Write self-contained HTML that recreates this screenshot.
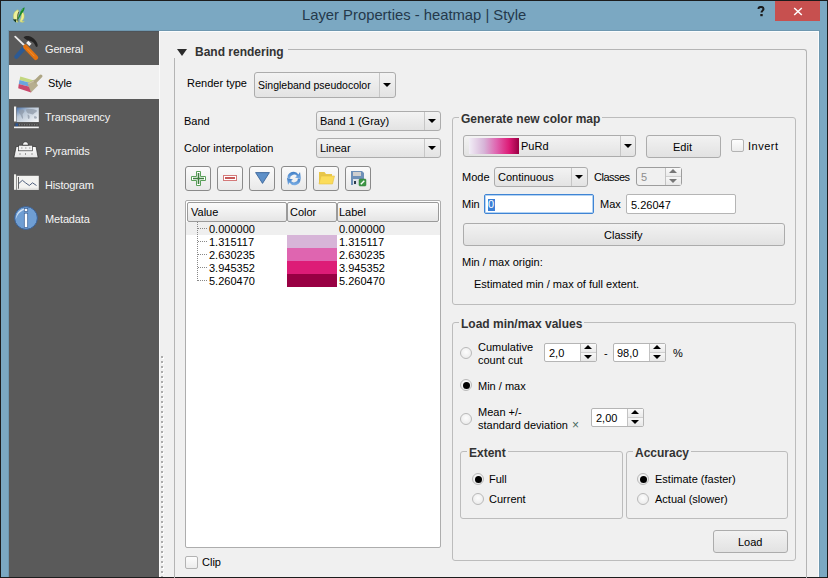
<!DOCTYPE html>
<html><head><meta charset="utf-8">
<style>
*{box-sizing:border-box}
html,body{margin:0;padding:0}
body{width:828px;height:578px;overflow:hidden;position:relative;background:#1c1c1c;font-family:"Liberation Sans",sans-serif;font-size:11px;color:#000}
.a{position:absolute}
.t{position:absolute;white-space:nowrap;font-size:11px;line-height:13px;color:#000}
.b{font-weight:bold;font-size:12px;color:#333}
.cb{position:absolute;border:1px solid #acacac;border-radius:3px;background:linear-gradient(#f3f3f3,#e3e3e3)}
.cb .sep{position:absolute;top:0;bottom:0;width:1px;background:#c6c6c6}
.cb .ar{position:absolute;width:0;height:0;border-left:4px solid transparent;border-right:4px solid transparent;border-top:4.5px solid #000}
.btn{position:absolute;border:1px solid #acacac;border-radius:3px;background:linear-gradient(#f2f2f2,#e2e2e2)}
.tb{position:absolute;width:26px;height:25px;border:1px solid #8a8a8a;border-radius:3px;background:linear-gradient(#fbfbfb,#e9e9e9)}
.le{position:absolute;border:1px solid #b5b5b5;border-radius:2px;background:#fff}
.gb{position:absolute;border:1px solid #bcbcbc;border-radius:3px}
.gbt{position:absolute;background:#f0f0f0;padding:0 2px}
.rd{position:absolute;width:12px;height:12px;border-radius:50%;border:1px solid #b9b9b9;background:radial-gradient(circle at 50% 40%,#fdfdfd,#e6e6e6)}
.rd.on::after{content:"";position:absolute;left:1.5px;top:1.5px;width:7px;height:7px;border-radius:50%;background:#000}
.ck{position:absolute;width:13px;height:13px;border:1px solid #b3b3b3;border-radius:2px;background:linear-gradient(#fdfdfd,#ececec)}
.sb .item{position:absolute;left:0;width:150px;height:34px}
.sb .lbl{position:absolute;color:#f4f4f4;font-size:11px;letter-spacing:-0.15px;line-height:13px;white-space:nowrap}
.spn{position:absolute;border:1px solid #b5b5b5;border-radius:2px;background:#fff}
.spn .sp{position:absolute;right:0;top:0;bottom:0;width:16px;border-left:1px solid #c3c3c3;background:linear-gradient(#fafafa,#ebebeb 45%,#f6f6f6 55%,#e8e8e8)}
.spn .hs{position:absolute;left:0;right:0;top:8px;height:1px;background:#cfcfcf}
.up{position:absolute;width:0;height:0;border-left:4px solid transparent;border-right:4px solid transparent;border-bottom:4px solid #000}
.dn{position:absolute;width:0;height:0;border-left:4px solid transparent;border-right:4px solid transparent;border-top:4px solid #000}
</style></head><body>
<!-- window frame -->
<div class="a" style="left:1px;top:1px;width:826px;height:576px;background:#7ba8c2"></div>
<div class="a" style="left:8px;top:30px;width:812px;height:547px;background:#6f98b0"></div>
<div class="a" style="left:9px;top:31px;width:810px;height:546px;background:#f0f0f0"></div>

<!-- title bar -->
<svg class="a" style="left:8px;top:3px" width="24" height="24" viewBox="0 0 24 24">
 <path d="M10 6.8 C6.5 7.8 5 11.5 5.5 14.5 C6 17.5 8 19.2 10 19.3 C9.2 16.5 9.2 12 10.8 8.8 Z" fill="#eef19a" stroke="#bfc75a" stroke-width="0.5"/>
 <path d="M10.8 8.8 C9.5 11.5 9.3 15.5 10 18.5" stroke="#3c4a2a" stroke-width="0.8" fill="none"/>
 <path d="M13.2 8.2 C15.8 9 16.5 12 16 14.5 C15.6 16.5 14.6 17.5 13.6 18 C14.6 18.5 15.6 18.8 16.4 18.2 C15.6 19.6 13 19.8 11.8 18.3 C13.5 15 14 11 13.2 8.2 Z" fill="#eef08f" stroke="#c2c85a" stroke-width="0.5"/>
 <path d="M16.6 4.2 C16.6 6.5 15.6 8.6 14 10.2 L10.2 16.6 L9.4 16.2 L12.3 9.6 C12.8 7 14.5 5 16.6 4.2 Z" fill="#1c8a2b"/>
 <path d="M13.5 7.5 L14.5 6.5" stroke="#7fd08a" stroke-width="0.8"/>
 <path d="M4.8 16.4 L8.6 16.3 L7.8 19.4 Z" fill="#15391f"/>
</svg>
<div class="t" style="left:302px;top:7px;font-size:14.8px;line-height:17px;color:#24394b">Layer Properties - heatmap | Style</div>
<svg class="a" style="left:757px;top:6px" width="8" height="11" viewBox="0 0 8 11"><path d="M1.5 3 C1.5 1.5 2.5 0.9 4 0.9 C5.5 0.9 6.5 1.8 6.5 3 C6.5 4.5 4.5 4.8 4.5 6.5" stroke="#1b1b1b" stroke-width="2" fill="none"/><rect x="3.3" y="8" width="2.4" height="2.2" fill="#1b1b1b"/></svg>
<div class="a" style="left:775px;top:1px;width:45px;height:20px;background:#c7504f"></div>
<svg class="a" style="left:793px;top:7px" width="10" height="9" viewBox="0 0 10 9"><path d="M1.2 1 L8.8 8 M8.8 1 L1.2 8" stroke="#fff" stroke-width="1.5"/></svg>

<!-- sidebar -->
<div class="a sb" style="left:9px;top:31px;width:150px;height:546px;background:#5a5a5a">
 <div class="item" style="top:34px;background:#f0f0f0"></div>
 <div class="lbl" style="left:36px;top:12px">General</div>
 <div class="lbl" style="left:39px;top:46px;color:#000">Style</div>
 <div class="lbl" style="left:36px;top:80px">Transparency</div>
 <div class="lbl" style="left:36px;top:114px">Pyramids</div>
 <div class="lbl" style="left:36px;top:148px">Histogram</div>
 <div class="lbl" style="left:36px;top:182px">Metadata</div>
</div>
<!-- icons -->
<svg class="a" style="left:12px;top:34px" width="28" height="28" viewBox="0 0 28 28">
 <path d="M11.5 3.2 C13 2 15 1.8 16.5 2.1 C19 2.6 21.5 3.8 23.5 6.5 C25 8.5 26 10.5 25.6 12.2 C25.2 13 24.5 13.2 23.8 12.6 C23.2 11 22.3 9.3 20.8 8 C19.5 7 17.5 6.4 16 6.4 C14.5 5.8 13 5 11.5 3.2 Z" fill="#242424"/>
 <path d="M3.2 2.6 L13.5 12.5" stroke="#ececec" stroke-width="1.8" stroke-linecap="round"/>
 <path d="M13 13 L4.3 22.8" stroke="#2c5a94" stroke-width="4.2" stroke-linecap="round"/>
 <path d="M13.5 12.8 L23.8 23.6" stroke="#e2720f" stroke-width="4.8" stroke-linecap="round"/>
 <path d="M15 14.5 L22.5 22.3" stroke="#f39a44" stroke-width="0.8"/>
 <path d="M15.2 7.8 L18.4 10.8" stroke="#f2f2f2" stroke-width="3.2"/>
</svg>
<svg class="a" style="left:16px;top:74px" width="28" height="22" viewBox="0 0 28 22">
 <path d="M4.3 2.5 L18 6.5 L17.5 9.8 L3.5 6 Z" fill="#c3d77f"/>
 <path d="M3.5 6 L17.5 9.8 L16.5 13.5 L2.8 10 Z" fill="#6aa4de"/>
 <path d="M2.8 10 L16.5 13.5 L15 18.6 L2.2 14.2 Z" fill="#c9486c"/>
 <path d="M11.5 9 L18.5 5.5 L22 11.5 L15 18.6 Z" fill="#b6ae8e"/>
 <path d="M12.5 9.5 L19 6.5" stroke="#d7d1b8" stroke-width="0.7"/>
 <path d="M19.5 7.5 L24.8 2.2" stroke="#ada584" stroke-width="3.2" stroke-linecap="round"/>
</svg>
<svg class="a" style="left:13px;top:104px" width="27" height="26" viewBox="0 0 27 26">
 <defs><linearGradient id="tg" x1="0" y1="0" x2="1" y2="1"><stop offset="0" stop-color="#4a72ab"/><stop offset="0.35" stop-color="#b8c6d6"/><stop offset="1" stop-color="#fafafa"/></linearGradient></defs>
 <rect x="1" y="2.5" width="2.2" height="15" fill="#f4f4f4"/>
 <rect x="3.6" y="3.5" width="22.2" height="14.5" fill="url(#tg)"/>
 <path d="M6 6 C8 5 11 5.5 11.5 7 C11 9 9.5 9.5 9.5 11 C10 12.5 10.5 14 9.5 15 C8.5 13.5 8 11.5 7 10 C6 9 5.5 7.5 6 6 Z M13 5.5 C16 4.8 21 5 24 6.5 C24 8 22 8.5 21 9.5 C20 11 19 10.5 18 10 C17 9.5 15.5 10 14.5 9 C13.5 8 13 7 13 5.5 Z M14.5 10.5 C16 10.5 17 12 16.5 14 C16 15.5 15 15 14.8 13.5 Z M21 12.5 C22.5 12 24 12.5 24 14 C23 15 21.5 15 21 13.5 Z" fill="#8f9aa8" opacity="0.75"/>
 <rect x="1.2" y="19.5" width="24.6" height="2.6" fill="#4a4a4a"/>
 <path d="M6 20.8 H25" stroke="#8a8a8a" stroke-width="1" stroke-dasharray="1 1.5"/>
 <rect x="2.5" y="19.3" width="2.6" height="3" fill="#2a5593"/>
 <rect x="1" y="22.6" width="24.8" height="1.6" fill="#f0f0f0"/>
</svg>
<svg class="a" style="left:13px;top:140px" width="27" height="20" viewBox="0 0 27 20">
 <defs><linearGradient id="pg" x1="0" y1="0" x2="0" y2="1"><stop offset="0" stop-color="#ffffff"/><stop offset="1" stop-color="#e4e4e4"/></linearGradient></defs>
 <path d="M0.8 17.8 L3.2 6.5 L23 6.5 L25.2 17.8 Z" fill="url(#pg)" stroke="#2a2a2a" stroke-width="0.7"/>
 <rect x="5.5" y="5.2" width="14" height="5.6" fill="#f2f2f2" stroke="#3a3a3a" stroke-width="0.7"/>
 <path d="M9.5 5.2 C9.5 3 11 1.8 12.5 1.8 C14 1.8 15.5 3 15.5 5.2 Z" fill="#f8f8f8" stroke="#2a2a2a" stroke-width="0.7"/>
 <path d="M8 8 h1.5 M12 8 h1.5 M16 8 h1.5 M7 13 v2 M12.5 13 v2 M19 13 v2" stroke="#9a9a9a" stroke-width="1"/>
</svg>
<svg class="a" style="left:13px;top:174px" width="27" height="18" viewBox="0 0 27 18">
 <defs><linearGradient id="hg" x1="0" y1="0" x2="0" y2="1"><stop offset="0" stop-color="#f3f3f1"/><stop offset="0.8" stop-color="#f3f3f1"/><stop offset="1" stop-color="#d6d6d4"/></linearGradient></defs>
 <rect x="1" y="0.3" width="2.1" height="15.5" fill="#efefec"/>
 <rect x="3.7" y="1.8" width="22.1" height="14.2" fill="url(#hg)"/>
 <rect x="5.1" y="3" width="0.9" height="11.7" fill="#555"/>
 <path d="M5.8 9.5 L9.4 6.3 L12.5 8.8 L16.3 11.5 L19.5 8.8 L23.5 11.5" stroke="#3d4f70" stroke-width="0.9" fill="none"/>
</svg>
<svg class="a" style="left:13px;top:205px" width="26" height="26" viewBox="0 0 26 26">
 <circle cx="13" cy="13" r="11.4" fill="#6f9ed3" stroke="#3a5f93" stroke-width="1"/>
 <path d="M12 3.2 C7 4 3 8 2.8 14.5 C4 10 7 6 12 4.8 Z" fill="#d2e2f4"/>
 <rect x="11.3" y="3.6" width="3.4" height="3" fill="#fff" stroke="#3a5f93" stroke-width="0.7"/>
 <rect x="11.3" y="8.2" width="3.4" height="14.3" fill="#fff" stroke="#3a5f93" stroke-width="0.7"/>
</svg>

<div class="a" style="left:159px;top:31px;width:660px;height:1px;background:#fbfdfe"></div>
<div class="a" style="left:159px;top:31px;width:1px;height:546px;background:#fafafa"></div>
<div class="a" style="left:9px;top:31px;width:150px;height:1px;background:#4f5459"></div>
<div class="a" style="left:818px;top:31px;width:1px;height:546px;background:#fbfcfd"></div>
<!-- splitter dots -->
<svg class="a" style="left:161px;top:356px" width="3" height="221"><defs><pattern id="dots" width="3" height="5" patternUnits="userSpaceOnUse"><rect x="1" y="1" width="2" height="2" fill="#ffffff"/><rect x="0" y="0" width="2" height="2" fill="#acacac"/></pattern></defs><rect width="3" height="221" fill="url(#dots)"/></svg>

<!-- band rendering group -->
<div class="a" style="left:177px;top:49px;width:0;height:0;border-left:5.5px solid transparent;border-right:5.5px solid transparent;border-top:7px solid #2b2b2b"></div>
<div class="t b" style="left:195px;top:46px">Band rendering</div>
<div class="a" style="left:288px;top:49px;width:519px;height:600px;border-top:1px solid #b4b4b4;border-right:1px solid #b4b4b4;border-top-right-radius:3px"></div>
<div class="a" style="left:174px;top:58px;width:1px;height:520px;background:#b4b4b4"></div>

<div class="t" style="left:187px;top:77px">Render type</div>
<div class="cb" style="left:254px;top:72px;width:142px;height:26px"><div class="sep" style="left:124px"></div><div class="ar" style="left:128px;top:10px"></div></div>
<div class="t" style="left:258px;top:79px;font-size:10.5px">Singleband pseudocolor</div>

<div class="t" style="left:184px;top:115px">Band</div>
<div class="t" style="left:184px;top:142px">Color interpolation</div>
<div class="cb" style="left:316px;top:111px;width:125px;height:20px"><div class="sep" style="left:107px"></div><div class="ar" style="left:111px;top:7px"></div></div>
<div class="t" style="left:320px;top:115px">Band 1 (Gray)</div>
<div class="cb" style="left:316px;top:138px;width:125px;height:20px"><div class="sep" style="left:107px"></div><div class="ar" style="left:111px;top:7px"></div></div>
<div class="t" style="left:320px;top:142px">Linear</div>

<!-- toolbar buttons -->
<div class="tb" style="left:185px;top:166px"><svg class="a" style="left:5px;top:4px" width="16" height="16" viewBox="0 0 16 16"><path d="M5.5 0.5 H9.5 V5.5 H14.5 V9.5 H9.5 V14.5 H5.5 V9.5 H0.5 V5.5 H5.5 Z" fill="#fff" stroke="#5aa05a" stroke-width="1"/><path d="M7.5 2 V13 M2 7.5 H13" stroke="#3f7f3f" stroke-width="1.6"/></svg></div>
<div class="tb" style="left:217px;top:166px"><div class="a" style="left:5px;top:8px;width:14px;height:6px;border:1px solid #d47a7a;background:#fff"><div class="a" style="left:1px;top:1px;width:10px;height:2px;background:#c75a5a"></div></div></div>
<div class="tb" style="left:249px;top:166px"><svg class="a" style="left:5px;top:5px" width="15" height="12" viewBox="0 0 15 12"><path d="M0.6 0.6 H14.4 L7.5 11.4 Z" fill="#5e90c8" stroke="#3b659a" stroke-width="0.9" stroke-linejoin="round"/></svg></div>
<div class="tb" style="left:281px;top:166px"><svg class="a" style="left:4px;top:3px" width="17" height="17" viewBox="0 0 17 17"><defs><linearGradient id="rg" x1="0" y1="0" x2="0" y2="1"><stop offset="0" stop-color="#3f7dc4"/><stop offset="1" stop-color="#7eb0e6"/></linearGradient></defs><path d="M1.5 8 A6 6 0 0 1 12.5 4.5 L14 2 L15 9 L9 7.5 L11 6 A4 4 0 0 0 4 8.5 Z" fill="url(#rg)"/><path d="M14.5 9 A6 6 0 0 1 3.5 12.5 L2 15 L1 8 L7 9.5 L5 11 A4 4 0 0 0 12 8.5 Z" fill="url(#rg)"/></svg></div>
<div class="tb" style="left:313px;top:166px"><svg class="a" style="left:4px;top:4px" width="17" height="14" viewBox="0 0 17 14"><path d="M1 1 H6.5 L8 3 H14 V12 H1 Z" fill="#e8c64a"/><path d="M3 5 H16.5 L14.5 13 H1 Z" fill="#fbdc5a" stroke="#e2bf44" stroke-width="0.6"/></svg></div>
<div class="tb" style="left:345px;top:166px"><svg class="a" style="left:4px;top:3px" width="17" height="17" viewBox="0 0 17 17"><path d="M1 1 H12 L14 3 V15 H1 Z" fill="#6e90b8"/><rect x="3" y="2" width="8" height="4" fill="#cfcfcf"/><rect x="3" y="9" width="8" height="6" fill="#dfe3e8"/><rect x="4" y="11" width="2" height="3" fill="#2d3b4c"/><rect x="9" y="9" width="7" height="7" rx="1" fill="#3d9646" stroke="#2d7a34" stroke-width="0.5"/><path d="M10.8 14.2 L14.3 10.7" stroke="#fff" stroke-width="1.4"/></svg></div>

<!-- table -->
<div class="a" style="left:185px;top:200px;width:256px;height:348px;border:1px solid #adadad;border-radius:2px;background:#fff;overflow:hidden">
 <div class="a" style="left:1px;top:1px;width:100px;height:20px;border:1px solid #9a9a9a;border-radius:2px;background:linear-gradient(#fbfbfb,#e5e5e5)"></div>
 <div class="a" style="left:101px;top:1px;width:50px;height:20px;border:1px solid #9a9a9a;border-radius:2px;background:linear-gradient(#fbfbfb,#e5e5e5)"></div>
 <div class="a" style="left:151px;top:1px;width:102px;height:20px;border:1px solid #9a9a9a;border-radius:2px;background:linear-gradient(#fbfbfb,#e5e5e5)"></div>
 <div class="a" style="left:0;top:21px;width:256px;height:13px;background:#efefef"></div>
 <div class="a" style="left:101px;top:34px;width:50px;height:13px;background:#d7b5d8"></div>
 <div class="a" style="left:101px;top:47px;width:50px;height:13px;background:#df65b0"></div>
 <div class="a" style="left:101px;top:60px;width:50px;height:13px;background:#dd1c77"></div>
 <div class="a" style="left:101px;top:73px;width:50px;height:13px;background:#980043"></div>
 <div class="a" style="left:11px;top:21px;width:1px;height:59px;background:repeating-linear-gradient(#888 0 1px,transparent 1px 2px)"></div>
 <div class="a" style="left:12px;top:27px;width:10px;height:1px;background:repeating-linear-gradient(90deg,#888 0 1px,transparent 1px 2px)"></div>
 <div class="a" style="left:12px;top:40px;width:10px;height:1px;background:repeating-linear-gradient(90deg,#888 0 1px,transparent 1px 2px)"></div>
 <div class="a" style="left:12px;top:53px;width:10px;height:1px;background:repeating-linear-gradient(90deg,#888 0 1px,transparent 1px 2px)"></div>
 <div class="a" style="left:12px;top:66px;width:10px;height:1px;background:repeating-linear-gradient(90deg,#888 0 1px,transparent 1px 2px)"></div>
 <div class="a" style="left:12px;top:79px;width:10px;height:1px;background:repeating-linear-gradient(90deg,#888 0 1px,transparent 1px 2px)"></div>
</div>
<div class="t" style="left:191px;top:206px">Value</div>
<div class="t" style="left:290px;top:206px">Color</div>
<div class="t" style="left:339px;top:206px">Label</div>
<div class="t" style="left:209px;top:223px">0.000000</div>
<div class="t" style="left:209px;top:236px">1.315117</div>
<div class="t" style="left:209px;top:249px">2.630235</div>
<div class="t" style="left:209px;top:262px">3.945352</div>
<div class="t" style="left:209px;top:275px">5.260470</div>
<div class="t" style="left:339px;top:223px">0.000000</div>
<div class="t" style="left:339px;top:236px">1.315117</div>
<div class="t" style="left:339px;top:249px">2.630235</div>
<div class="t" style="left:339px;top:262px">3.945352</div>
<div class="t" style="left:339px;top:275px">5.260470</div>

<div class="ck" style="left:185px;top:556px"></div>
<div class="t" style="left:202px;top:556px">Clip</div>

<!-- generate new color map -->
<div class="gb" style="left:452px;top:117px;width:344px;height:188px"></div>
<div class="t b gbt" style="left:459px;top:113px">Generate new color map</div>
<div class="cb" style="left:463px;top:135px;width:173px;height:22px"><div class="sep" style="left:156px"></div><div class="ar" style="left:160px;top:8px"></div>
 <div class="a" style="left:5px;top:2px;width:50px;height:16px;background:linear-gradient(90deg,#f1eef6,#d7b5d8 30%,#df65b0 55%,#dd1c77 80%,#980043)"></div></div>
<div class="t" style="left:521px;top:140px">PuRd</div>
<div class="btn" style="left:646px;top:135px;width:75px;height:23px"></div>
<div class="t" style="left:673px;top:141px">Edit</div>
<div class="ck" style="left:731px;top:139px"></div>
<div class="t" style="left:748px;top:140px;letter-spacing:0.5px">Invert</div>

<div class="t" style="left:462px;top:171px">Mode</div>
<div class="cb" style="left:494px;top:167px;width:94px;height:20px"><div class="sep" style="left:76px"></div><div class="ar" style="left:80px;top:7px"></div></div>
<div class="t" style="left:498px;top:171px">Continuous</div>
<div class="t" style="left:594px;top:171px;letter-spacing:-0.5px">Classes</div>
<div class="spn" style="left:636px;top:167px;width:46px;height:19px;background:#f0f0f0;border-color:#9d9d9d;border-radius:3px"><div class="sp"><div class="hs"></div><div class="up" style="left:3px;top:1px;border-bottom-color:#777"></div><div class="dn" style="left:3px;top:11px;border-top-color:#777"></div></div></div>
<div class="t" style="left:641px;top:171px;color:#8d8d8d">5</div>

<div class="t" style="left:462px;top:198px">Min</div>
<div class="le" style="left:484px;top:194px;width:110px;height:20px;border-color:#3f84d4;box-shadow:inset 0 0 0 1px #b3d3f3"></div>
<div class="a" style="left:488px;top:199px;width:7px;height:12px;background:#3b7fd6"></div>
<div class="t" style="left:488px;top:198px;color:#fff">0</div>
<div class="t" style="left:600px;top:198px">Max</div>
<div class="le" style="left:626px;top:194px;width:110px;height:20px"></div>
<div class="t" style="left:631px;top:199px">5.26047</div>

<div class="btn" style="left:463px;top:223px;width:322px;height:23px"></div>
<div class="t" style="left:604px;top:229px">Classify</div>
<div class="t" style="left:462px;top:256px">Min / max origin:</div>
<div class="t" style="left:474px;top:278px">Estimated min / max of full extent.</div>

<!-- load min/max -->
<div class="gb" style="left:452px;top:322px;width:344px;height:239px"></div>
<div class="t b gbt" style="left:459px;top:318px">Load min/max values</div>
<div class="rd" style="left:460px;top:347px"></div>
<div class="t" style="left:478px;top:341px">Cumulative</div>
<div class="t" style="left:478px;top:354px">count cut</div>
<div class="spn" style="left:544px;top:343px;width:53px;height:19px"><div class="sp"><div class="hs"></div><div class="up" style="left:3px;top:1px"></div><div class="dn" style="left:3px;top:11px"></div></div></div>
<div class="t" style="left:549px;top:347px">2,0</div>
<div class="t" style="left:604px;top:347px">-</div>
<div class="spn" style="left:613px;top:343px;width:53px;height:19px"><div class="sp"><div class="hs"></div><div class="up" style="left:3px;top:1px"></div><div class="dn" style="left:3px;top:11px"></div></div></div>
<div class="t" style="left:617px;top:347px">98,0</div>
<div class="t" style="left:673px;top:347px">%</div>

<div class="rd on" style="left:460px;top:379px"></div>
<div class="t" style="left:478px;top:380px">Min / max</div>

<div class="rd" style="left:460px;top:413px"></div>
<div class="t" style="left:478px;top:406px">Mean +/-</div>
<div class="t" style="left:478px;top:419px">standard deviation <span style="color:#47685f;font-size:12px;margin-left:1px">×</span></div>
<div class="spn" style="left:591px;top:408px;width:53px;height:19px"><div class="sp"><div class="hs"></div><div class="up" style="left:3px;top:1px"></div><div class="dn" style="left:3px;top:11px"></div></div></div>
<div class="t" style="left:596px;top:412px">2,00</div>

<div class="gb" style="left:460px;top:451px;width:163px;height:68px"></div>
<div class="t b gbt" style="left:467px;top:447px">Extent</div>
<div class="rd on" style="left:472px;top:473px"></div>
<div class="t" style="left:489px;top:473px">Full</div>
<div class="rd" style="left:472px;top:493px"></div>
<div class="t" style="left:489px;top:493px">Current</div>

<div class="gb" style="left:626px;top:451px;width:162px;height:68px"></div>
<div class="t b gbt" style="left:633px;top:447px">Accuracy</div>
<div class="rd on" style="left:637px;top:473px"></div>
<div class="t" style="left:655px;top:473px">Estimate (faster)</div>
<div class="rd" style="left:637px;top:493px"></div>
<div class="t" style="left:655px;top:493px">Actual (slower)</div>

<div class="btn" style="left:713px;top:530px;width:75px;height:23px"></div>
<div class="t" style="left:738px;top:536px">Load</div>
</body></html>
